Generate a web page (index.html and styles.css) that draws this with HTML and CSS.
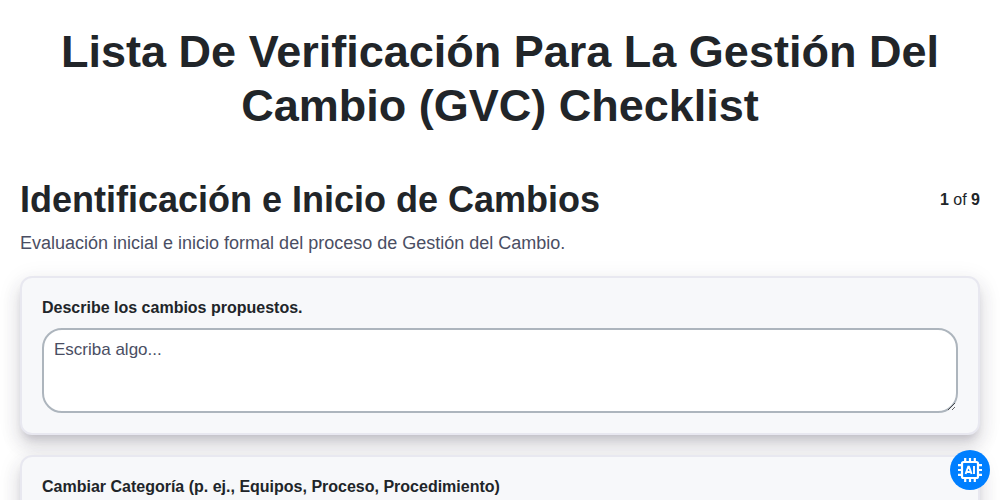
FILE: index.html
```html
<!DOCTYPE html>
<html lang="es">
<head>
    <meta charset="UTF-8">
    <meta name="viewport" content="width=device-width, initial-scale=1.0">
    <title>Lista De Verificación Para La Gestión Del Cambio (GVC) Checklist</title>
    <link rel="stylesheet" href="styles.css">
</head>
<body>
    <h1 class="title">Lista De Verificación Para La Gestión Del Cambio (GVC) Checklist</h1>

    <div class="section-header">
        <h2>Identificación e Inicio de Cambios</h2>
        <div class="pages"><b>1</b> of <b>9</b></div>
    </div>
    <p class="description">Evaluación inicial e inicio formal del proceso de Gestión del Cambio.</p>

    <div class="card">
        <label for="changes">Describe los cambios propuestos.</label>
        <textarea id="changes" placeholder="Escriba algo..."></textarea>
    </div>
    <div class="card">
        <label for="category">Cambiar Categoría (p. ej., Equipos, Proceso, Procedimiento)</label>
        <textarea id="category" placeholder="Escriba algo..."></textarea>
    </div>

    <button class="ai-button" aria-label="AI">
        <svg width="24" height="24" viewBox="0 0 24 24" fill="none" stroke="#fff" stroke-width="2">
            <rect x="4" y="4" width="16" height="16" rx="1.5" stroke-width="2.2"/>
            <path d="M7.2 0v4M12 0v4M16.8 0v4M7.2 20v4M12 20v4M16.8 20v4M0 7.2h4M0 12h4M0 16.8h4M20 7.2h4M20 12h4M20 16.8h4" stroke-width="2.2"/>
            <path d="M7.6 16L10.2 8.8h.8L13.6 16M8.8 14h3.8M16 8v8" stroke-width="1.9"/>
        </svg>
    </button>
</body>
</html>
```

FILE: styles.css
```css
* {
    box-sizing: border-box;
}
html {
    overflow: hidden;
}
body {
    height: 500px;
    margin: 0;
    padding: 25px 20px 0;
    overflow: hidden;
    font-family: "Liberation Sans", Arial, sans-serif;
    font-size: 16px;
    color: #212529;
    background-color: #fff;
}
.title {
    margin: 0 0 45px;
    font-size: 45px;
    line-height: 54px;
    text-align: center;
}
.section-header {
    display: flex;
    justify-content: space-between;
    align-items: center;
}
.section-header h2 {
    margin: 0;
    font-size: 36px;
    line-height: 44px;
}
.description {
    margin: 10px 0 22px;
    font-size: 18px;
    line-height: 22px;
    color: #4a4e63;
}
.card {
    margin-bottom: 20px;
    padding: 21px 20px 20px;
    border: 2px solid #e8e8f0;
    border-radius: 12px;
    background-color: #f7f8fa;
    box-shadow: 0 7px 8px -4px rgba(58, 53, 75, 0.2), 0 12px 17px 2px rgba(58, 53, 75, 0.12), 0 5px 22px 4px rgba(58, 53, 75, 0.06);
}
.card label {
    display: block;
    margin-bottom: 11px;
    font-weight: bold;
    line-height: 18px;
}
.card textarea {
    display: block;
    width: 100%;
    height: 85px;
    padding: 10px;
    border: 2px solid #adb5bd;
    border-radius: 20px;
    background-color: #fff;
    font-family: inherit;
    font-size: 17px;
}
.card textarea::placeholder {
    color: #4a4e63;
}
.ai-button {
    position: fixed;
    right: 10px;
    bottom: 10px;
    display: flex;
    align-items: center;
    justify-content: center;
    width: 40px;
    height: 40px;
    padding: 0;
    border: none;
    border-radius: 50%;
    background-color: #007fff;
}
```
